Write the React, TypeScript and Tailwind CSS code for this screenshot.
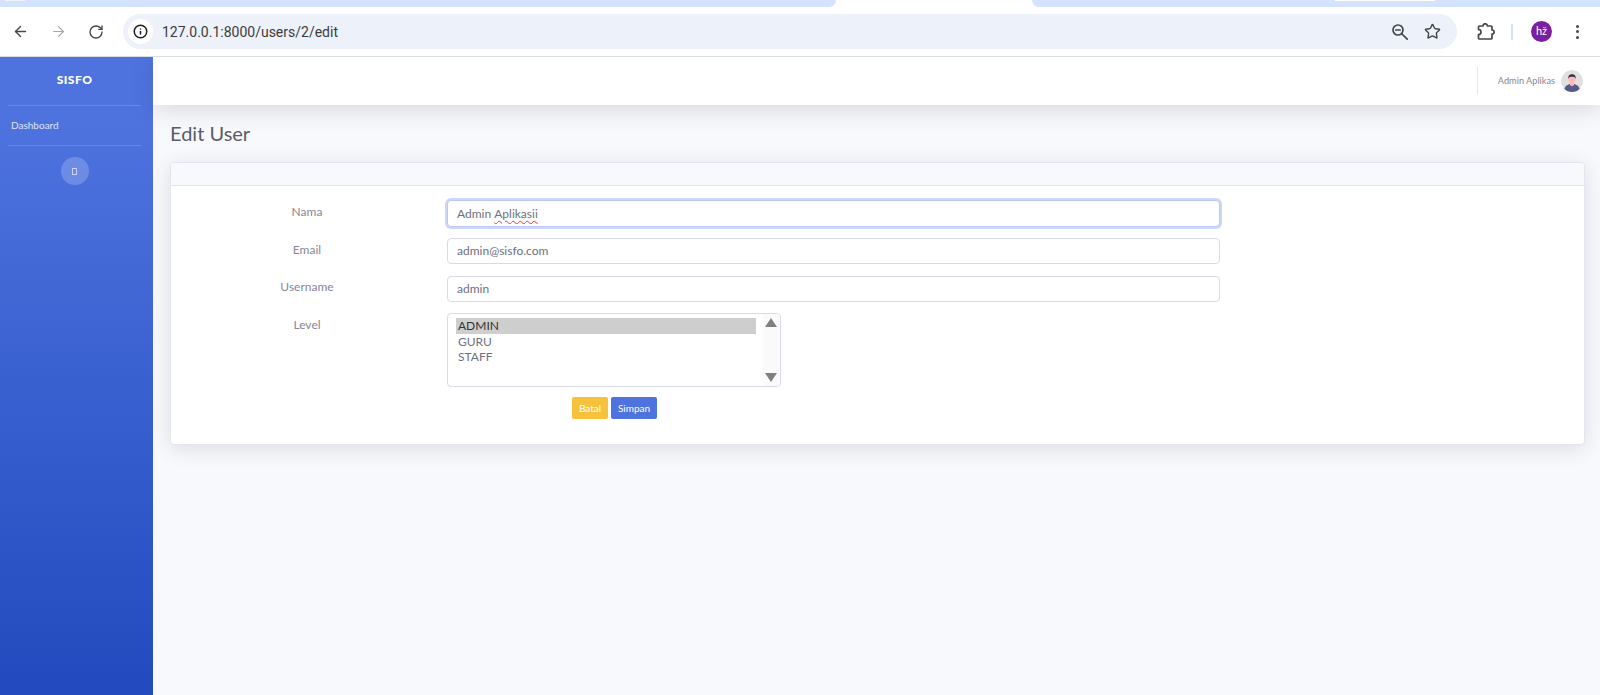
import { ArrowLeft, ArrowRight, RotateCw, Info, Star } from "lucide-react";

const font = { fontFamily: '"Lato", sans-serif' };

function Avatar() {
  return (
    <svg width="22" height="22" viewBox="0 0 22 22" className="rounded-full">
      <circle cx="11" cy="11" r="11" fill="#e0e0e0" />
      <path d="M3 20 C4 15.5 7 14.5 9 14 L13 14 C15 14.5 18 15.5 19 20 C16 23 6 23 3 20Z" fill="#575a89" />
      <path d="M9 11 L13 11 L13 15 C12 16.5 10 16.5 9 15Z" fill="#ffb8b8" />
      <circle cx="11" cy="9" r="3.4" fill="#ffb8b8" />
      <path d="M7.3 9 C7 5 9 4.2 11 4.2 C13 4.2 15 5 14.7 9 C14 7 13 6.8 11 6.8 C9 6.8 8 7 7.3 9Z" fill="#2f2e41" />
    </svg>
  );
}

function ExtensionIcon() {
  return (
    <svg width="18" height="18" viewBox="0 0 18 18" fill="none" stroke="#444746" strokeWidth="1.7" strokeLinejoin="round" className="ml-[20px]">
      <path d="M1.5 6.5 V4 a1 1 0 0 1 1-1 H6 a2.2 2.2 0 0 1 4.4 0 H14 a1 1 0 0 1 1 1 V7 a2.1 2.1 0 0 1 0 4.2 V15 a1 1 0 0 1-1 1 H2.5 a1 1 0 0 1-1-1 V11.5 a2.5 2.5 0 0 0 0-5Z" />
    </svg>
  );
}

function ZoomIcon() {
  return (
    <svg width="18" height="18" viewBox="0 0 18 18" fill="none" stroke="#444746" strokeWidth="1.7" strokeLinecap="round">
      <circle cx="7" cy="7" r="5" />
      <path d="M4.8 7 H9.2" />
      <path d="M11 11 L16.2 16.2" />
    </svg>
  );
}

function Row({ label, children, mt, top }: { label: string; children: React.ReactNode; mt: string; top: string }) {
  return (
    <div className={`flex items-start ${mt}`}>
      <div className={`w-[272px] mr-[4px] text-center text-[12px] leading-[16px] text-[#858796] ${top}`}>{label}</div>
      {children}
    </div>
  );
}

function Field({ children, focus }: { children: React.ReactNode; focus?: boolean }) {
  return (
    <div
      className={`w-[773px] flex items-center px-[9px] text-[12px] text-[#6e707e] bg-white rounded-[4px] border ${
        focus ? "h-[27px] border-[#bac8f3] shadow-[0_0_0_2px_#cdd7f6]" : "h-[26px] border-[#d8dae8]"
      }`}
    >
      {children}
    </div>
  );
}

export default function App() {
  return (
    <div className="h-[695px] w-[1600px] overflow-hidden flex flex-col bg-[#f8f9fc]" style={font}>
      {/* Browser tab strip */}
      <div className="h-[7px] shrink-0 flex bg-white">
        <div className="w-[836px] bg-[#d3e3fd] rounded-br-[10px] relative">
          <div className="absolute left-[5px] top-0 w-[20px] h-[1px] bg-[#eef3fd]" />
        </div>
        <div className="w-[196px]" />
        <div className="flex-1 bg-[#d3e3fd] rounded-bl-[10px] relative">
          <div className="absolute left-[303px] top-0 w-[100px] h-[1px] bg-white" />
        </div>
      </div>
      {/* Browser toolbar */}
      <div className="h-[50px] shrink-0 bg-white border-b border-[#dadce0] flex items-center relative">
        <div className="w-[123px] shrink-0 flex items-center text-[#444746]">
          <ArrowLeft size={17} strokeWidth={2} className="ml-[12px]" />
          <ArrowRight size={17} strokeWidth={1.6} className="ml-[21px] text-[#a6a8ab]" />
          <RotateCw size={16} strokeWidth={2} className="ml-[21px]" />
        </div>
        <div className="w-[1334px] h-[35px] rounded-full bg-[#ecf1fa] flex items-center pl-[5px] pr-[16px]">
          <div className="w-[25px] h-[25px] rounded-full bg-white flex items-center justify-center text-[#1f1f1f]">
            <Info size={15} strokeWidth={2.4} />
          </div>
          <div className="ml-[9px] pt-[1px] text-[14px] text-[#3c3c3c] flex-1" style={{ fontFamily: '"Roboto", sans-serif' }}>
            127.0.0.1:8000/users/2/edit
          </div>
          <ZoomIcon />
          <Star size={17} strokeWidth={2} className="ml-[15px] text-[#444746]" />
        </div>
        <ExtensionIcon />
        <div className="ml-[16px] w-[2px] h-[16px] bg-[#d3e3fd]" />
        <div className="ml-[18px] w-[21px] h-[21px] rounded-full bg-[#7b1fa2] text-white text-[11px] flex items-center justify-center">hž</div>
        <div className="ml-[24px] flex flex-col gap-[2.5px]">
          <span className="w-[3px] h-[3px] rounded-full bg-[#444746]" />
          <span className="w-[3px] h-[3px] rounded-full bg-[#444746]" />
          <span className="w-[3px] h-[3px] rounded-full bg-[#444746]" />
        </div>
      </div>
      {/* Page */}
      <div className="flex-1 flex min-h-0">
        <aside className="w-[153px] shrink-0 bg-gradient-to-b from-[#4e73df] from-10% to-[#224abe] pl-[8px] pr-[12px] flex flex-col">
          <div className="h-[48px] shrink-0 flex items-center justify-center text-white text-[12px] font-black tracking-[0.04em] pb-[3px]">SISFO</div>
          <div className="h-[1px] bg-white/15" />
          <div className="h-[39px] flex items-center pl-[3px] text-[10px] text-white/80">Dashboard</div>
          <div className="h-[1px] bg-white/15" />
          <div className="mt-[11px] self-center w-[28px] h-[28px] rounded-full bg-white/20 flex items-center justify-center">
            <div className="w-[5px] h-[7px] border border-white/60" />
          </div>
        </aside>
        <main className="flex-1 min-w-0 flex flex-col">
          <header className="h-[48px] shrink-0 bg-white shadow-[0_5px_22px_rgba(58,59,69,0.16)] flex items-center justify-end pr-[17px]">
            <div className="w-[1px] h-[28px] bg-[#e3e6f0] mr-[20px]" />
            <span className="text-[9.2px] text-[#858796] mr-[6px]">Admin Aplikas</span>
            <Avatar />
          </header>
          <div className="pl-[17px] pr-[15px]">
            <h1 className="mt-[15px] h-[26px] text-[20px] leading-[26px] text-[#5a5c69]">Edit User</h1>
            <section className="mt-[16px] h-[283px] bg-white rounded-[4px] border border-[#e3e6f0] shadow-[0_4px_20px_rgba(58,59,69,0.14)] overflow-hidden">
              <div className="h-[23px] bg-[#f8f9fc] border-b border-[#e3e6f0]" />
              <div className="pt-[14px]">
                <Row label="Nama" mt="" top="pt-[4px]">
                  <Field focus>
                    Admin&nbsp;
                    <span className="underline decoration-wavy decoration-[#e53935] decoration-[1px] underline-offset-2">Aplikasii</span>
                  </Field>
                </Row>
                <Row label="Email" mt="mt-[11px]" top="pt-[4px]">
                  <Field>admin@sisfo.com</Field>
                </Row>
                <Row label="Username" mt="mt-[12px]" top="pt-[3px]">
                  <Field>admin</Field>
                </Row>
                <Row label="Level" mt="mt-[11px]" top="pt-[4px]">
                  <div className="w-[334px] h-[74px] bg-white rounded-[4px] border border-[#d8dae8] flex text-[12px] leading-[15px] text-[#6e707e]">
                    <div className="flex-1 pl-[8px] pt-[4px] pr-[7px]">
                      <div className="bg-[#cecece] text-[#333] pl-[2px] leading-[16px]">ADMIN</div>
                      <div className="pl-[2px]">GURU</div>
                      <div className="pl-[2px]">STAFF</div>
                    </div>
                    <div className="w-[16px] mr-[1px] py-[4px] bg-[#fafafa] flex flex-col items-center justify-between">
                      <div className="w-0 h-0 border-x-[6px] border-x-transparent border-b-[9px] border-b-[#808080]" />
                      <div className="w-0 h-0 border-x-[6px] border-x-transparent border-t-[9px] border-t-[#808080]" />
                    </div>
                  </div>
                </Row>
                <div className="mt-[10px] ml-[401px] flex gap-[3px]">
                  <button className="w-[36px] h-[22px] rounded-[2px] bg-[#f6c23e] text-white text-[10px]">Batal</button>
                  <button className="w-[46px] h-[22px] rounded-[2px] bg-[#4e73df] text-white text-[10px]">Simpan</button>
                </div>
              </div>
            </section>
          </div>
        </main>
      </div>
    </div>
  );
}
